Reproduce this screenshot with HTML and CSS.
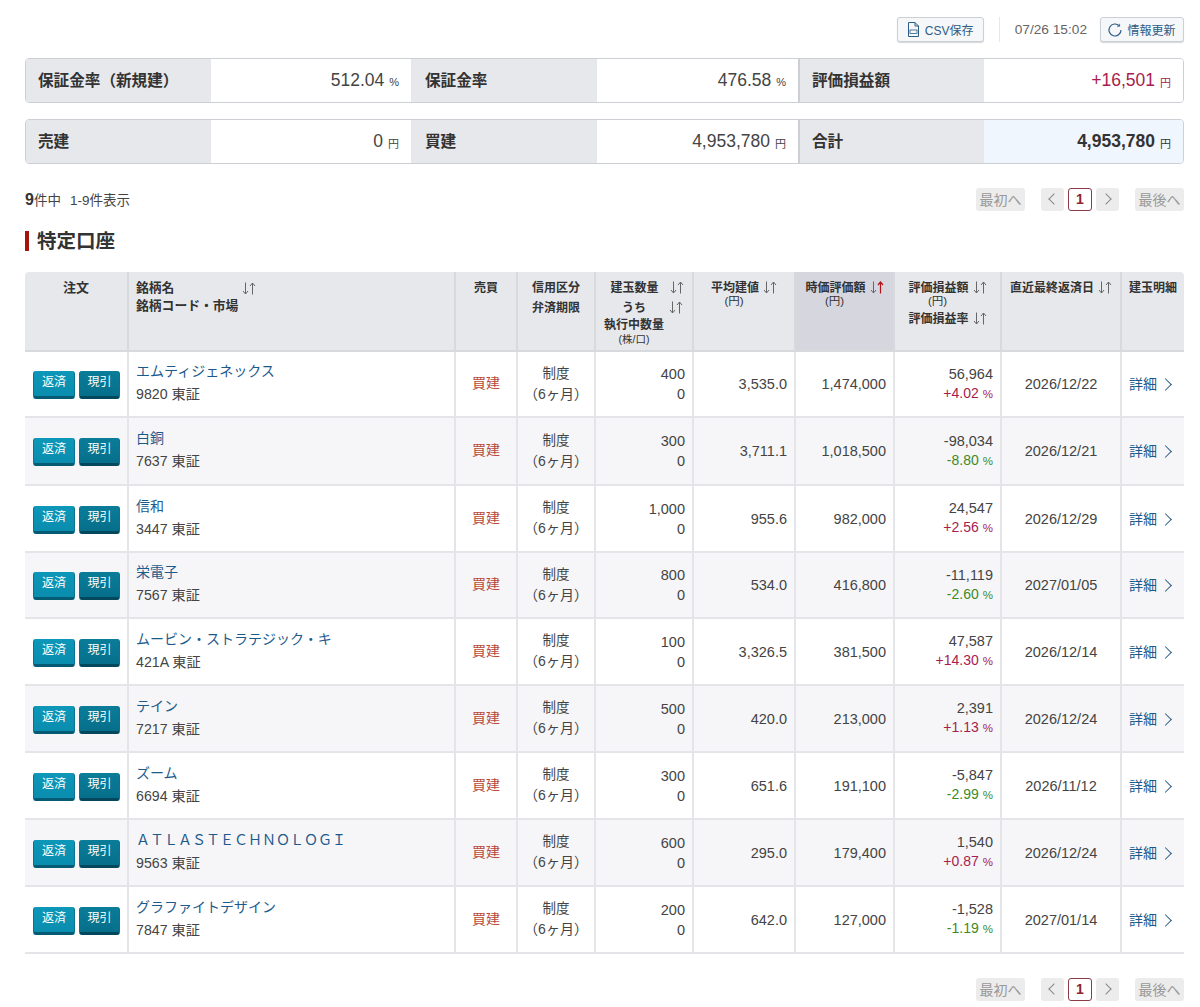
FILE: index.html
```html
<!DOCTYPE html>
<html lang="ja">
<head>
<meta charset="utf-8">
<title>建玉一覧</title>
<link rel="stylesheet" href="styles.css">
</head>
<body>
<svg class="defs" width="0" height="0" aria-hidden="true">
  <symbol id="sort" viewBox="0 0 14 13"><path d="M3.500 .5v11.500M1 9l2.500 3L6 9M10.500 12.500V1M8 4l2.500-3L13 4" fill="none" stroke="#666" stroke-width="1"/></symbol>
  <symbol id="sort-a" viewBox="0 0 14 13"><path d="M3.500 .5v11.500M1 9l2.500 3L6 9" fill="none" stroke="#666" stroke-width="1"/><path d="M10.500 12.500V1M8 4l2.500-3L13 4" fill="none" stroke="#b3121d" stroke-width="1.200"/></symbol>
</svg>
<main class="page">
  <div class="toolbar">
    <button class="tool-btn csv"><svg class="ico" width="13" height="15" viewBox="0 0 13 15"><path d="M1.500.5h6.500l3.500 3.500v10.500h-10zM8 .5v3.500h3.500" fill="none" stroke="#2d5c86"/><rect x="3" y="8" width="7" height="3.500" fill="none" stroke="#2d5c86" stroke-width=".8"/></svg>CSV保存</button>
    <span class="divider"></span>
    <span class="time">07/26 15:02</span>
    <button class="tool-btn refresh"><svg class="ico" width="14" height="14" viewBox="0 0 14 14"><path d="M11.300 2.800A6 6 0 1 0 13 7" fill="none" stroke="#2d5c86" stroke-width="1.200"/><path d="M11.600 .8v2.500H9.100" fill="none" stroke="#2d5c86" stroke-width=".8"/></svg>情報更新</button>
  </div>

  <section class="summary">
    <div class="s-label">保証金率（新規建）</div><div class="s-val">512.04<small>%</small></div>
    <div class="s-label mid">保証金率</div><div class="s-val">476.58<small>%</small></div>
    <div class="s-label third">評価損益額</div><div class="s-val plus">+16,501<small>円</small></div>
  </section>
  <section class="summary second">
    <div class="s-label">売建</div><div class="s-val">0<small>円</small></div>
    <div class="s-label mid">買建</div><div class="s-val">4,953,780<small>円</small></div>
    <div class="s-label third">合計</div><div class="s-val total">4,953,780<small>円</small></div>
  </section>

  <div class="pager-row top">
    <div class="count"><b>9</b>件中<span>1-9件表示</span></div>
    <nav class="pager">
      <span class="pg wide">最初へ</span>
      <span class="pg sq"><i class="chev left"></i></span>
      <span class="pg sq cur">1</span>
      <span class="pg sq"><i class="chev"></i></span>
      <span class="pg wide last">最後へ</span>
    </nav>
  </div>

  <h2 class="title">特定口座</h2>

  <table class="grid">
    <colgroup>
      <col class="c1"><col class="c2"><col class="c3"><col class="c4"><col class="c5"><col class="c6"><col class="c7"><col class="c8"><col class="c9"><col class="c10">
    </colgroup>
    <thead>
      <tr>
        <th class="order-h">注文</th>
        <th class="name-h"><div class="nh1">銘柄名<svg class="sort abs"><use href="#sort"/></svg></div>銘柄コード・市場</th>
        <th>売買</th>
        <th><div class="lh2">信用区分</div><div class="lh2">弁済期限</div></th>
        <th><div class="lh2 qty">建玉数量<svg class="sort q"><use href="#sort"/></svg></div><div class="uchi">うち<svg class="sort w"><use href="#sort"/></svg></div><div class="exec">執行中数量</div><div class="unit">(株/口)</div></th>
        <th>平均建値<svg class="sort"><use href="#sort"/></svg><div class="unit n">(円)</div></th>
        <th class="active">時価評価額<svg class="sort"><use href="#sort-a"/></svg><div class="unit n">(円)</div></th>
        <th>評価損益額<svg class="sort"><use href="#sort"/></svg><div class="unit n">(円)</div><div class="rate">評価損益率<svg class="sort"><use href="#sort"/></svg></div></th>
        <th>直近最終返済日<svg class="sort"><use href="#sort"/></svg></th>
        <th>建玉明細</th>
      </tr>
    </thead>
    <tbody>
      <tr class="h66"><td class="btns"><a class="b b1">返済</a><a class="b b2">現引</a></td><td class="nm"><a>エムティジェネックス</a><div>9820 東証</div></td><td class="buy">買建</td><td class="ctr">制度<br><span class="term">（6ヶ月）</span></td><td class="num">400<br>0</td><td class="num">3,535.0</td><td class="num">1,474,000</td><td class="num pl">56,964<br><span class="up">+4.02<small>%</small></span></td><td class="date">2026/12/22</td><td class="det"><a>詳細</a><i class="chev blue"></i></td></tr>
      <tr class="alt h68"><td class="btns"><a class="b b1">返済</a><a class="b b2">現引</a></td><td class="nm"><a>白銅</a><div>7637 東証</div></td><td class="buy">買建</td><td class="ctr">制度<br><span class="term">（6ヶ月）</span></td><td class="num">300<br>0</td><td class="num">3,711.1</td><td class="num">1,018,500</td><td class="num pl">-98,034<br><span class="down">-8.80<small>%</small></span></td><td class="date">2026/12/21</td><td class="det"><a>詳細</a><i class="chev blue"></i></td></tr>
      <tr class="h67"><td class="btns"><a class="b b1">返済</a><a class="b b2">現引</a></td><td class="nm"><a>信和</a><div>3447 東証</div></td><td class="buy">買建</td><td class="ctr">制度<br><span class="term">（6ヶ月）</span></td><td class="num">1,000<br>0</td><td class="num">955.6</td><td class="num">982,000</td><td class="num pl">24,547<br><span class="up">+2.56<small>%</small></span></td><td class="date">2026/12/29</td><td class="det"><a>詳細</a><i class="chev blue"></i></td></tr>
      <tr class="alt h66"><td class="btns"><a class="b b1">返済</a><a class="b b2">現引</a></td><td class="nm"><a>栄電子</a><div>7567 東証</div></td><td class="buy">買建</td><td class="ctr">制度<br><span class="term">（6ヶ月）</span></td><td class="num">800<br>0</td><td class="num">534.0</td><td class="num">416,800</td><td class="num pl">-11,119<br><span class="down">-2.60<small>%</small></span></td><td class="date">2027/01/05</td><td class="det"><a>詳細</a><i class="chev blue"></i></td></tr>
      <tr class="h67"><td class="btns"><a class="b b1">返済</a><a class="b b2">現引</a></td><td class="nm"><a>ムービン・ストラテジック・キ</a><div>421A 東証</div></td><td class="buy">買建</td><td class="ctr">制度<br><span class="term">（6ヶ月）</span></td><td class="num">100<br>0</td><td class="num">3,326.5</td><td class="num">381,500</td><td class="num pl">47,587<br><span class="up">+14.30<small>%</small></span></td><td class="date">2026/12/14</td><td class="det"><a>詳細</a><i class="chev blue"></i></td></tr>
      <tr class="alt h67"><td class="btns"><a class="b b1">返済</a><a class="b b2">現引</a></td><td class="nm"><a>テイン</a><div>7217 東証</div></td><td class="buy">買建</td><td class="ctr">制度<br><span class="term">（6ヶ月）</span></td><td class="num">500<br>0</td><td class="num">420.0</td><td class="num">213,000</td><td class="num pl">2,391<br><span class="up">+1.13<small>%</small></span></td><td class="date">2026/12/24</td><td class="det"><a>詳細</a><i class="chev blue"></i></td></tr>
      <tr class="h67"><td class="btns"><a class="b b1">返済</a><a class="b b2">現引</a></td><td class="nm"><a>ズーム</a><div>6694 東証</div></td><td class="buy">買建</td><td class="ctr">制度<br><span class="term">（6ヶ月）</span></td><td class="num">300<br>0</td><td class="num">651.6</td><td class="num">191,100</td><td class="num pl">-5,847<br><span class="down">-2.99<small>%</small></span></td><td class="date">2026/11/12</td><td class="det"><a>詳細</a><i class="chev blue"></i></td></tr>
      <tr class="alt h67"><td class="btns"><a class="b b1">返済</a><a class="b b2">現引</a></td><td class="nm"><a>ＡＴＬＡＳＴＥＣＨＮＯＬＯＧＩ</a><div>9563 東証</div></td><td class="buy">買建</td><td class="ctr">制度<br><span class="term">（6ヶ月）</span></td><td class="num">600<br>0</td><td class="num">295.0</td><td class="num">179,400</td><td class="num pl">1,540<br><span class="up">+0.87<small>%</small></span></td><td class="date">2026/12/24</td><td class="det"><a>詳細</a><i class="chev blue"></i></td></tr>
      <tr class="h67"><td class="btns"><a class="b b1">返済</a><a class="b b2">現引</a></td><td class="nm"><a>グラファイトデザイン</a><div>7847 東証</div></td><td class="buy">買建</td><td class="ctr">制度<br><span class="term">（6ヶ月）</span></td><td class="num">200<br>0</td><td class="num">642.0</td><td class="num">127,000</td><td class="num pl">-1,528<br><span class="down">-1.19<small>%</small></span></td><td class="date">2027/01/14</td><td class="det"><a>詳細</a><i class="chev blue"></i></td></tr>
    </tbody>
  </table>

  <div class="pager-row bottom">
    <nav class="pager">
      <span class="pg wide">最初へ</span>
      <span class="pg sq"><i class="chev left"></i></span>
      <span class="pg sq cur">1</span>
      <span class="pg sq"><i class="chev"></i></span>
      <span class="pg wide last">最後へ</span>
    </nav>
  </div>
</main>
</body>
</html>
```
FILE: styles.css
```css
* { box-sizing: border-box; }
html, body { margin: 0; background: #fff; }
body {
  font-family: "Liberation Sans", "Noto Sans CJK JP", sans-serif;
  color: #333;
  font-size: 14px;
  overflow: hidden;
}
.defs { position: absolute; }
.page { width: 1200px; height: 1007px; padding: 17px 16px 0 25px; overflow: hidden; }

.toolbar { display: flex; align-items: center; justify-content: flex-end; height: 25px; }
.tool-btn {
  display: flex; align-items: center; justify-content: center; gap: 5px;
  height: 25px; padding: 0;
  background: #f6f7f9; border: 1px solid #ccd0d5; border-radius: 3px;
  box-shadow: 0 1px 1px #d5d7da;
  color: #2d5c86; font: 12px "Liberation Sans", "Noto Sans CJK JP", sans-serif;
}
.csv { width: 87px; }
.refresh { width: 84px; }
.divider { width: 1px; height: 25px; background: #e8e8e8; margin: 0 15px; }
.time { font-size: 13.700px; color: #666; margin-right: 13px; }

.summary {
  display: grid;
  grid-template-columns: 185px 200px 186px 201px 186px 1fr;
  height: 45px; margin-top: 16px;
  border: 1px solid #ccd0d5; border-radius: 4px; overflow: hidden;
}
.s-label {
  display: flex; align-items: center; padding: 0 0 4px 12px;
  background: #e7e8ec; font-weight: bold; font-size: 15.600px; color: #333;
}
.s-label.mid { padding-left: 14px; }
.s-label.third { border-left: 2px solid #ccd0d5; }
.s-val {
  display: flex; align-items: center; justify-content: flex-end; padding: 0 12px 0 0;
  font-size: 17.500px; color: #444; background: #fff;
}
.s-val small { font-size: 11px; margin-left: 5px; padding-top: 3px; }
.plus { color: #a81c4e; }
.total { background: #eff6fd; font-weight: bold; color: #333; }
.total small { font-weight: normal; }

.pager-row { display: flex; align-items: center; justify-content: space-between; }
.pager-row.top { margin-top: 23px; height: 24px; }
.pager-row.bottom { margin-top: 23px; justify-content: flex-end; height: 24px; }
.count { font-size: 13.500px; color: #444; }
.count b { font-size: 16px; color: #333; }
.count span { margin-left: 9px; }
.pager { display: flex; align-items: center; gap: 4px; }
.pg {
  display: flex; align-items: center; justify-content: center;
  height: 23px; background: #ececec; color: #999; border-radius: 3px; font-size: 14px;
}
.pg.wide { width: 49px; margin-right: 12px; }
.pg.wide.last { margin: 0 0 0 12px; }
.pg.sq { width: 23px; }
.pg.cur {
  width: 24px; background: #fff; border: 1px solid #8c3a46; color: #8c2430; font-weight: bold; font-size: 14px;
}
.chev {
  display: inline-block; width: 8px; height: 8px;
  border-top: 1px solid #888; border-right: 1px solid #888;
  transform: rotate(45deg); margin-left: -3px;
}
.chev.left { transform: rotate(-135deg); margin: 0 0 0 3px; }

.title {
  margin: 20px 0 0; height: 20px; padding-left: 8px;
  border-left: 4px solid #a3140f;
  font-size: 19.500px; line-height: 20px; font-weight: bold; color: #333;
}

.grid {
  width: 1159px; margin-top: 21px; table-layout: fixed;
  border-collapse: separate; border-spacing: 0; font-size: 14.500px;
}
.c1 { width: 102px; } .c2 { width: 327px; } .c3 { width: 62px; } .c4 { width: 78px; } .c5 { width: 98px; }
.c6 { width: 102px; } .c7 { width: 99px; } .c8 { width: 107px; } .c9 { width: 120px; } .c10 { width: 64px; }

.grid th {
  height: 80px; padding: 9px 0 0; vertical-align: top; text-align: center;
  background: #e7e8ec; font-size: 12px; line-height: 14px; font-weight: bold; color: #333;
  border-left: 2px solid #d8d9dd; border-bottom: 2px solid #d8d9dd;
}
.grid th:first-child { border-left: 0; border-top-left-radius: 4px; }
.grid th:last-child { border-top-right-radius: 4px; }
.grid th.order-h { font-size: 13px; }
.grid th.name-h { text-align: left; padding-left: 7px; font-size: 12.800px; line-height: 14px; }
.nh1 { position: relative; margin-bottom: 4px; }
.sort { width: 14px; height: 13px; margin-left: 4px; vertical-align: -2px; }
.sort.abs { position: absolute; left: 106px; top: 1px; margin: 0; }
.sort.q { margin-left: 11px; }
.sort.w { margin-left: 23px; }
.lh2 { line-height: 20px; margin-top: -3px; }
.lh2 + .lh2 { margin-top: 0; }
.qty { padding-left: 6px; }
.uchi { line-height: 20px; padding-left: 17px; margin-top: 0; }
.exec { line-height: 14px; margin-top: 0; padding-right: 20px; }
.unit { font-size: 10.500px; font-weight: normal; line-height: 14px; padding-right: 20px; }
.unit.n { line-height: 12px; font-size: 11.500px; margin-top: 0; }
.rate { line-height: 20px; margin-top: 2px; }
.grid th.active { background: #d5d6de; }

.grid td {
  padding: 0; vertical-align: middle;
  border-left: 2px solid #e4e5e8; border-bottom: 2px solid #e4e5e8;
  color: #444; line-height: 20px;
}
.grid td:first-child { border-left: 0; }
.h66 td { height: 66px; } .h67 td { height: 67px; } .h68 td { height: 68px; }
.alt td { background: #f6f6f8; }
.grid td.btns { white-space: nowrap; padding: 2px 0 0 8px; font-size: 0; }
.b {
  display: inline-block; width: 41px; height: 28px; margin-right: 4px;
  border-radius: 3px; color: #fff; font-size: 12px; line-height: 22px; text-align: center;
  border-bottom: 3px solid #055b73; border-left: 1px solid #0a7391; border-right: 1px solid #0a7391;
  vertical-align: middle;
}
.b1 { width: 42px; background: linear-gradient(#0d97b8, #0a8dae); }
.b2 { background: linear-gradient(#0a7d99, #066f8b); border-bottom-color: #03485c; }
.grid td.nm { padding: 0 0 3px 7px; }
.nm a { display: block; color: #1d5a8c; font-size: 14px; line-height: 20px; margin-bottom: 3px; }
.nm div { font-size: 14.200px; line-height: 20px; color: #444; }
.grid td.buy { text-align: center; color: #b94a3a; font-size: 14px; padding-bottom: 2px; }
.ctr { text-align: center; font-size: 13.500px; }
.term { font-size: 14px; }
.grid td.num { text-align: right; padding-right: 7px; }
.grid td.pl { line-height: 19px; }
.up { color: #a81c4e; font-size: 14px; }
.down { color: #3e8a25; font-size: 14px; }
.pl small { font-size: 11.500px; margin-left: 4px; }
.date { text-align: center; }
.grid td.det { padding-left: 7px; white-space: nowrap; }
.det a { color: #1d5a8c; font-size: 14px; }
.chev.blue { width: 9px; height: 9px; margin-left: 4px; border-color: #2d5c86; }
```
